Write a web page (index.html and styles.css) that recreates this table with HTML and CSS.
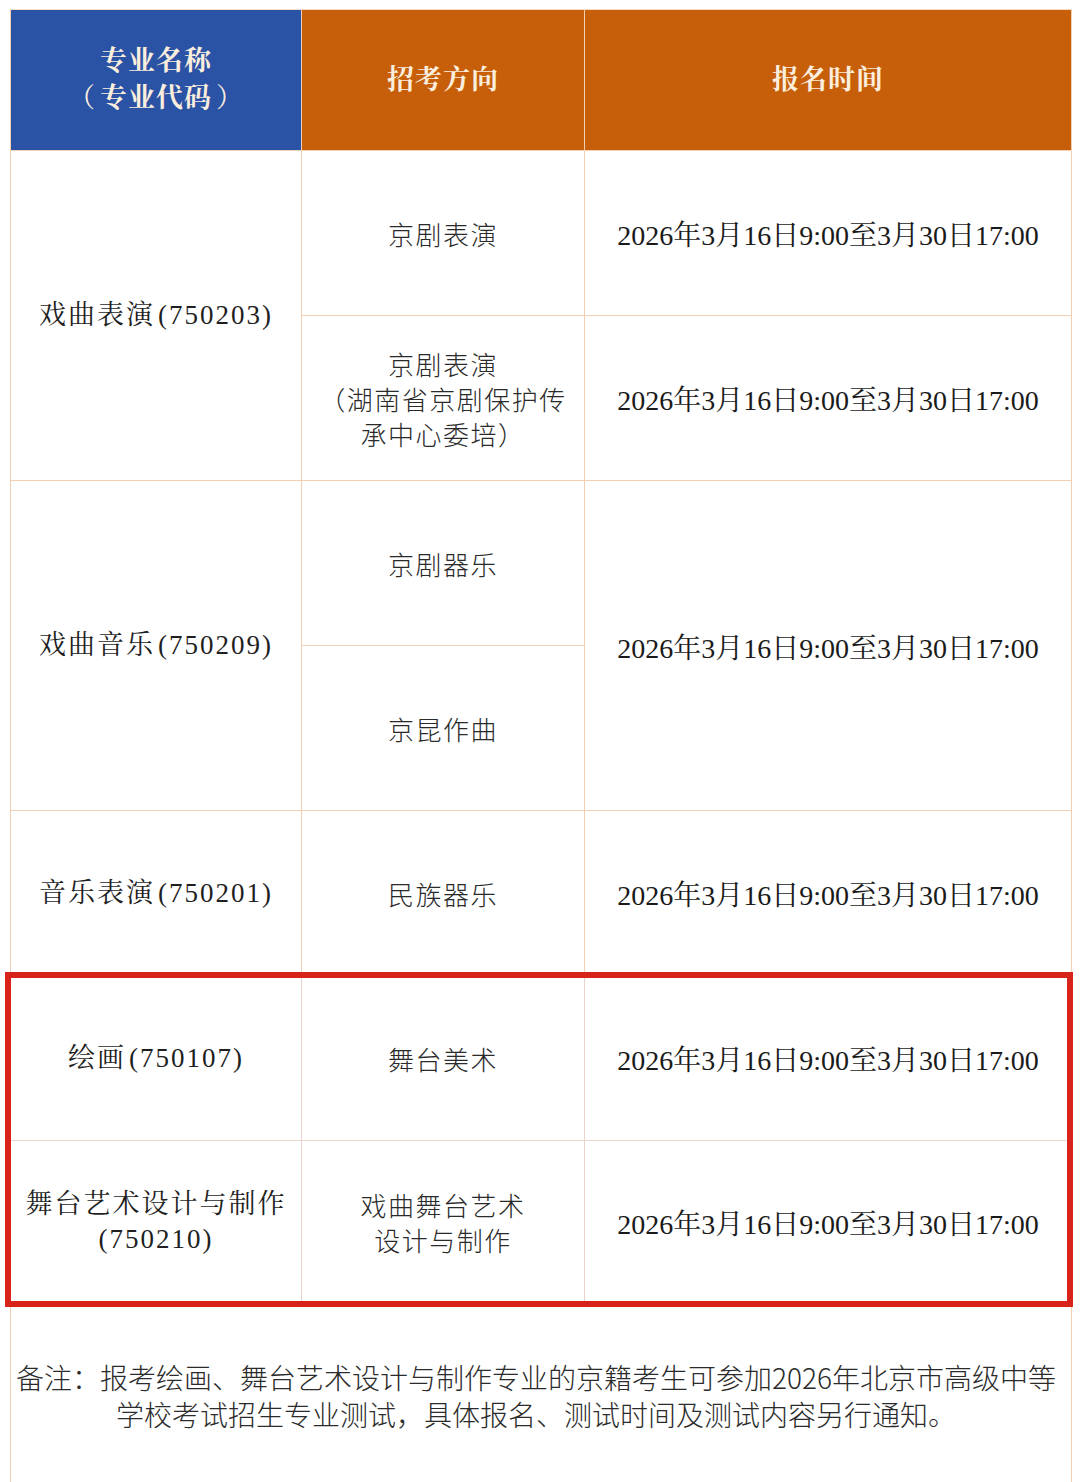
FILE: index.html
```html
<!DOCTYPE html>
<html lang="zh-CN">
<head>
<meta charset="utf-8">
<title>招考方向</title>
<link rel="stylesheet" href="styles.css">
</head>
<body>
<div class="wrap">
  <table class="plan">
    <colgroup>
      <col class="c1"><col class="c2"><col class="c3">
    </colgroup>
    <thead>
      <tr class="head">
        <th class="h-blue">专业名称<br><span class="paren">（</span>专业代码<span class="paren">）</span></th>
        <th class="h-orange">招考方向</th>
        <th class="h-orange">报名时间</th>
      </tr>
    </thead>
    <tbody>
      <tr class="row">
        <td class="major" rowspan="2">戏曲表演<span class="code">(750203)</span></td>
        <td class="dir">京剧表演</td>
        <td class="date">2026年3月16日9:00至3月30日17:00</td>
      </tr>
      <tr class="row">
        <td class="dir lines">京剧表演<br>（湖南省京剧保护传<br>承中心委培）</td>
        <td class="date">2026年3月16日9:00至3月30日17:00</td>
      </tr>
      <tr class="row">
        <td class="major" rowspan="2">戏曲音乐<span class="code">(750209)</span></td>
        <td class="dir">京剧器乐</td>
        <td class="date" rowspan="2">2026年3月16日9:00至3月30日17:00</td>
      </tr>
      <tr class="row">
        <td class="dir">京昆作曲</td>
      </tr>
      <tr class="row">
        <td class="major">音乐表演<span class="code">(750201)</span></td>
        <td class="dir">民族器乐</td>
        <td class="date">2026年3月16日9:00至3月30日17:00</td>
      </tr>
      <tr class="row hl">
        <td class="major">绘画<span class="code">(750107)</span></td>
        <td class="dir">舞台美术</td>
        <td class="date">2026年3月16日9:00至3月30日17:00</td>
      </tr>
      <tr class="row last hl">
        <td class="major lines">舞台艺术设计与制作<br>(750210)</td>
        <td class="dir lines">戏曲舞台艺术<br>设计与制作</td>
        <td class="date">2026年3月16日9:00至3月30日17:00</td>
      </tr>
      <tr class="note-row">
        <td class="note" colspan="3">备注：报考绘画、舞台艺术设计与制作专业的京籍考生可参加2026年北京市高级中等<br>学校考试招生专业测试，具体报名、测试时间及测试内容另行通知。</td>
      </tr>
    </tbody>
  </table>
  <div class="highlight"></div>
</div>
</body>
</html>
```
FILE: styles.css
```css
html, body {
  margin: 0;
  padding: 0;
  background: #ffffff;
}
body {
  height: 1482px;
  overflow: hidden;
}
.wrap {
  position: relative;
  width: 1061px;
  margin: 9px 0 0 10px;
}
.plan {
  width: 1061px;
  border-collapse: collapse;
  table-layout: fixed;
  font-family: "Liberation Serif", "Noto Serif CJK SC", "Noto Sans CJK SC", serif;
}
.c1 { width: 291px; }
.c2 { width: 283px; }
.c3 { width: 487px; }

.plan th, .plan td {
  border: 1px solid #f3cfb3;
  text-align: center;
  vertical-align: middle;
  padding: 0;
}
.head { height: 141px; }
.head th {
  color: #fbeedd;
  font-family: "Liberation Serif", "Noto Serif CJK SC", "Noto Sans CJK SC", serif;
  font-weight: 700;
  font-size: 27px;
  letter-spacing: 1px;
  line-height: 37px;
  border-top-color: #f6dcc8;
}
.paren {
  font-weight: 400;
  margin: 0 4px;
}
.h-blue {
  background: #2a52a5;
  border-left-color: #e9c9b0;
}
.h-orange {
  background: #c65e0a;
}
.row { height: 165px; }
.row.last { height: 162px; }

.major {
  font-size: 27px;
  letter-spacing: 2px;
  color: #1f1f1f;
  line-height: 35px;
}
.code {
  margin-left: 3px;
}
.dir {
  font-family: "Noto Sans CJK SC", sans-serif;
  font-weight: 300;
  font-size: 26px;
  letter-spacing: 1.5px;
  color: #2a2a2a;
  line-height: 35px;
}
.date {
  font-size: 28px;
  color: #1a1a1a;
  white-space: nowrap;
  padding-top: 4px;
}
.hl td {
  border-color: #ead3cc;
}
.note-row { height: 181px; }
.note {
  vertical-align: top !important;
  padding: 56px 12px 0 2px !important;
  font-family: "Noto Sans CJK SC", sans-serif;
  font-weight: 300;
  font-size: 28px;
  line-height: 37px;
  color: #2b2b2b;
  white-space: nowrap;
}
.highlight {
  position: absolute;
  left: -5px;
  top: 963px;
  width: 1056px;
  height: 323px;
  border: 6px solid #d8231a;
  pointer-events: none;
}
```
